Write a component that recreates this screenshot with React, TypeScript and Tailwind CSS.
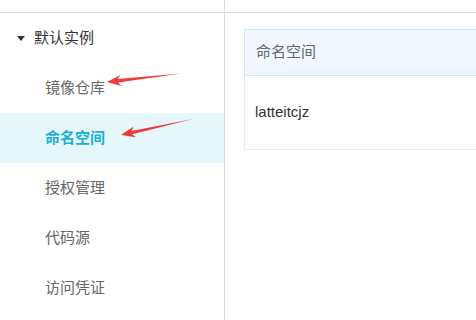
import React from 'react';

const font = { fontFamily: '"Liberation Sans", "Noto Sans CJK SC", sans-serif' };

const menuItems = [
  { label: '镜像仓库', active: false },
  { label: '命名空间', active: true },
  { label: '授权管理', active: false },
  { label: '代码源', active: false },
  { label: '访问凭证', active: false },
];

// builds the polygon of a tapered annotation arrow from tail to tip
function arrowPoints(tx: number, ty: number, px: number, py: number) {
  const dx = px - tx;
  const dy = py - ty;
  const len = Math.hypot(dx, dy);
  const ux = dx / len;
  const uy = dy / len;
  const nx = -uy;
  const ny = ux;
  const headLen = 14;
  const headW = 5.5;
  const shaftW = 1.7;
  const bx = px - ux * headLen;
  const by = py - uy * headLen;
  const nbx = px - ux * (headLen - 3);
  const nby = py - uy * (headLen - 3);
  const pts = [
    [tx, ty],
    [nbx + nx * shaftW, nby + ny * shaftW],
    [bx + nx * headW, by + ny * headW],
    [px, py],
    [bx - nx * headW, by - ny * headW],
    [nbx - nx * shaftW, nby - ny * shaftW],
  ];
  return pts.map((p) => p.map((v) => v.toFixed(1)).join(',')).join(' ');
}

function Arrows() {
  return (
    <svg className="absolute inset-0 pointer-events-none" width="476" height="320" viewBox="0 0 476 320">
      <polygon points={arrowPoints(181, 73.5, 107, 82)} fill="#f03a3a" />
      <polygon points={arrowPoints(193, 119, 121, 135)} fill="#f03a3a" />
    </svg>
  );
}

export default function App() {
  return (
    <div className="relative w-[476px] h-[320px] overflow-hidden bg-white flex" style={font}>
      {/* Sidebar */}
      <div className="w-[225px] shrink-0 border-r border-[#dcdcdc] flex flex-col">
        <div className="h-[13px] border-b border-[#dcdcdc]" />
        <div className="h-[50px] flex items-center pl-[17px]">
          <span className="w-0 h-0 border-l-[4px] border-r-[4px] border-t-[5px] border-l-transparent border-r-transparent border-t-[#333]" />
          <span className="ml-[9px] text-[15px] text-[#333]">默认实例</span>
        </div>
        {menuItems.map((item) => (
          <div
            key={item.label}
            className={
              item.active
                ? 'h-[50px] flex items-center pl-[45px] bg-[#e5f7fb] text-[#19b0d6] font-bold text-[15px]'
                : 'h-[50px] flex items-center pl-[45px] text-[#666] text-[15px]'
            }
          >
            {item.label}
          </div>
        ))}
      </div>

      {/* Content */}
      <div className="flex-1 flex flex-col">
        <div className="h-[13px] border-b border-[#dcdcdc]" />
        <div className="pl-[19px] pt-[16px]">
          <div className="w-[300px] border border-[#ececec]">
            <div className="h-[47px] -m-px mb-0 bg-[#f0f7ff] border border-[#cfe4fa] flex items-center pl-[11px] text-[15px] text-[#666]">
              命名空间
            </div>
            <div className="h-[73px] flex items-center pl-[10px] text-[15px] text-[#333]">latteitcjz</div>
          </div>
        </div>
      </div>

      <Arrows />
    </div>
  );
}
